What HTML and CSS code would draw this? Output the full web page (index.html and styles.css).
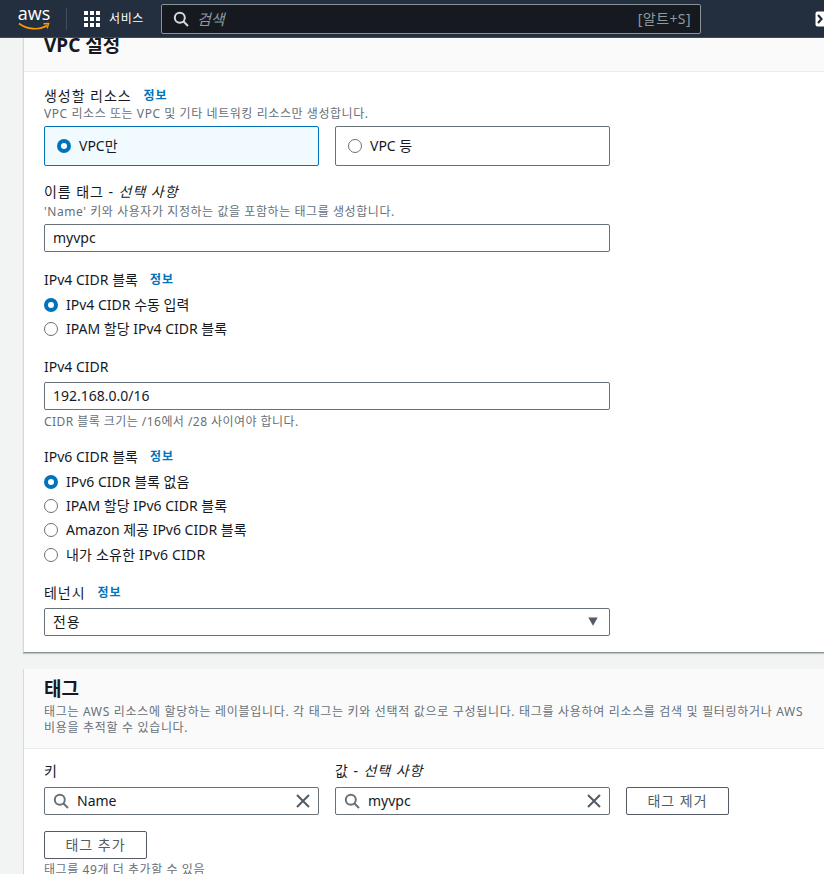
FILE: index.html
```html
<!DOCTYPE html>
<html lang="ko">
<head>
    <meta charset="UTF-8">
    <title>VPC 생성</title>
    <link rel="stylesheet" href="styles.css">
</head>
<body>

<header class="top-nav">
    <div class="brand">
        <span class="brand-text">aws</span>
        <svg class="brand-smile" width="32" height="9" viewBox="0 0 32 9">
            <path d="M1 1.5C9 7.5 21 8.5 29 3.5" fill="none" stroke="#ff9900" stroke-width="1.6"/>
            <path d="M25.5 1.8L30.6 1.5L29.2 6.4" fill="none" stroke="#ff9900" stroke-width="1.4"/>
        </svg>
    </div>
    <div class="nav-divider"></div>
    <button type="button" class="services-btn">
        <span class="grid-icon">
            <i></i><i></i><i></i><i></i><i></i><i></i><i></i><i></i><i></i>
        </span>
        <span class="services-text">서비스</span>
    </button>
    <div class="nav-search">
        <svg width="16" height="16" viewBox="0 0 16 16">
            <circle cx="6.8" cy="6.8" r="5" fill="none" stroke="#d5dbdb" stroke-width="2"/>
            <path d="M10.5 10.5L15 15" stroke="#d5dbdb" stroke-width="2"/>
        </svg>
        <span class="nav-search-text">검색</span>
        <span class="nav-search-key">[알트+S]</span>
    </div>
    <div class="nav-edge">
        <svg width="9" height="16" viewBox="0 0 9 16">
            <rect x="0.5" y="0.5" width="14" height="15" rx="2" fill="#fff"/>
            <path d="M3 4L6.5 8L3 12" fill="none" stroke="#232f3e" stroke-width="2.2"/>
        </svg>
    </div>
</header>

<main class="content">
    <section class="panel">
        <div class="panel-head panel-head-clipped">
            <h2>VPC 설정</h2>
        </div>
        <div class="panel-body">
            <div class="label-row"><span class="ko">생성할 리소스</span><a class="info">정보</a></div>
            <div class="desc">VPC 리소스 또는 VPC 및 기타 네트워킹 리소스만 생성합니다.</div>
            <div class="tiles">
                <div class="tile tile-on"><span class="radio radio-on"></span>VPC만</div>
                <div class="tile"><span class="radio"></span>VPC 등</div>
            </div>

            <div class="label-row gap-16"><span class="ko">이름 태그 - <em>선택 사항</em></span></div>
            <div class="desc desc-spaced">'Name' 키와 사용자가 지정하는 값을 포함하는 태그를 생성합니다.</div>
            <div class="input input-wide input-tight">myvpc</div>

            <div class="label-row gap-18"><span>IPv4 CIDR 블록</span><a class="info">정보</a></div>
            <div class="radio-group">
                <div class="radio-row"><span class="radio radio-on"></span>IPv4 CIDR 수동 입력</div>
                <div class="radio-row"><span class="radio"></span>IPAM 할당 IPv4 CIDR 블록</div>
            </div>

            <div class="label-row gap-15"><span>IPv4 CIDR</span></div>
            <div class="input input-wide input-loose">192.168.0.0/16</div>
            <div class="desc hint">CIDR 블록 크기는 /16에서 /28 사이여야 합니다.</div>

            <div class="label-row gap-17"><span>IPv6 CIDR 블록</span><a class="info">정보</a></div>
            <div class="radio-group">
                <div class="radio-row"><span class="radio radio-on"></span>IPv6 CIDR 블록 없음</div>
                <div class="radio-row"><span class="radio"></span>IPAM 할당 IPv6 CIDR 블록</div>
                <div class="radio-row"><span class="radio"></span>Amazon 제공 IPv6 CIDR 블록</div>
                <div class="radio-row"><span class="radio"></span><span class="ko-light">내가 소유한 IPv6 CIDR</span></div>
            </div>

            <div class="label-row gap-16"><span class="ko">테넌시</span><a class="info">정보</a></div>
            <div class="input input-wide input-loose select">
                <span class="ko">전용</span>
                <svg width="10" height="9" viewBox="0 0 10 9"><path d="M0.3 0.5H9.7L5 8.8Z" fill="#545b64"/></svg>
            </div>
        </div>
    </section>

    <section class="panel panel-second">
        <div class="panel-head">
            <h2>태그</h2>
            <div class="desc tag-desc">태그는 AWS 리소스에 할당하는 레이블입니다. 각 태그는 키와 선택적 값으로 구성됩니다. 태그를 사용하여 리소스를 검색 및 필터링하거나 AWS 비용을 추적할 수 있습니다.</div>
        </div>
        <div class="panel-body panel-body-tags">
            <div class="tag-row">
                <div class="tag-col">
                    <div class="label-row"><span>키</span></div>
                    <div class="input input-search">
                        <svg width="16" height="16" viewBox="0 0 16 16">
                            <circle cx="6.8" cy="6.8" r="5" fill="none" stroke="#687078" stroke-width="2"/>
                            <path d="M10.5 10.5L15 15" stroke="#687078" stroke-width="2"/>
                        </svg>
                        <span class="input-value">Name</span>
                        <svg width="14" height="14" viewBox="0 0 14 14"><path d="M1 1L13 13M13 1L1 13" stroke="#545b64" stroke-width="2"/></svg>
                    </div>
                </div>
                <div class="tag-col">
                    <div class="label-row"><span class="ko">값 - <em>선택 사항</em></span></div>
                    <div class="input input-search">
                        <svg width="16" height="16" viewBox="0 0 16 16">
                            <circle cx="6.8" cy="6.8" r="5" fill="none" stroke="#687078" stroke-width="2"/>
                            <path d="M10.5 10.5L15 15" stroke="#687078" stroke-width="2"/>
                        </svg>
                        <span class="input-value">myvpc</span>
                        <svg width="14" height="14" viewBox="0 0 14 14"><path d="M1 1L13 13M13 1L1 13" stroke="#545b64" stroke-width="2"/></svg>
                    </div>
                </div>
                <button type="button" class="btn">태그 제거</button>
            </div>
            <button type="button" class="btn btn-add">태그 추가</button>
            <div class="desc btn-hint">태그를 49개 더 추가할 수 있음</div>
        </div>
    </section>
</main>

</body>
</html>
```

FILE: styles.css
```css
html, body {
    margin: 0;
    height: 874px;
    overflow: hidden;
}

body {
    background-color: #f2f3f3;
    color: #16191f;
    font-family: "Noto Sans", "Noto Sans CJK KR", sans-serif;
    font-size: 14px;
    line-height: 20px;
}

/* Korean glyphs run wider in the original font */
.ko {
    letter-spacing: 0.95px;
}

.ko-light {
    letter-spacing: 0.2px;
}

/* top nav */
.top-nav {
    position: relative;
    z-index: 2;
    display: flex;
    align-items: center;
    height: 37px;
    background-color: #232f3e;
    border-bottom: 1px solid #3e4a58;
    color: #ffffff;
}

.brand {
    display: flex;
    flex-direction: column;
    align-items: center;
    width: 32px;
    margin-left: 18px;
}

.brand-text {
    font-family: "Open Sans", sans-serif;
    font-size: 18px;
    line-height: 14px;
    margin-top: -1px;
}

.brand-smile {
    display: block;
    margin-top: 2px;
}

.nav-divider {
    width: 1px;
    height: 22px;
    margin-left: 16px;
    background-color: #414d5c;
}

.services-btn {
    display: flex;
    align-items: center;
    gap: 9px;
    margin-left: 17px;
    padding: 0;
    background: none;
    border: none;
    color: #ffffff;
    font: inherit;
    font-size: 12px;
}

.services-text {
    letter-spacing: 0.6px;
}

.grid-icon {
    display: grid;
    grid-template-columns: repeat(3, 4px);
    gap: 2px;
}

.grid-icon i {
    width: 4px;
    height: 4px;
    background-color: #ffffff;
}

.nav-search {
    display: flex;
    align-items: center;
    box-sizing: border-box;
    width: 540px;
    height: 30px;
    margin-left: 17px;
    padding: 0 9px 0 11px;
    background-color: #16191f;
    border: 1px solid #879596;
    border-radius: 2px;
}

.nav-search-text {
    margin-left: 8px;
    color: #8d9ba0;
    font-size: 15px;
    font-style: italic;
}

.nav-search-key {
    margin-left: auto;
    color: #8d9ba0;
    font-size: 14px;
    letter-spacing: 0.4px;
}

.nav-edge {
    display: flex;
    margin-left: auto;
}

/* panels */
.content {
    padding-left: 23px;
}

.panel {
    background-color: #ffffff;
    border-left: 1px solid #d5dbdb;
    border-bottom: 1px solid #879596;
    box-shadow: 0 1px 1px rgba(0, 28, 36, 0.2);
}

.panel-second {
    margin-top: 16px;
    border-bottom: none;
    box-shadow: none;
}

.panel-head {
    padding: 8px 20px 12px;
    background-color: #fafafa;
    border-bottom: 1px solid #eaeded;
}

.panel-head-clipped {
    display: flex;
    align-items: flex-end;
    box-sizing: border-box;
    height: 34px;
    padding: 0 20px 14px;
}

.panel-head h2 {
    margin: 0 0 3px;
    font-size: 19px;
    line-height: 24px;
    font-weight: 700;
}

.panel-head-clipped h2 {
    margin: 0;
}

.panel-body {
    padding: 14px 20px 16px;
}

.panel-body-tags {
    padding-top: 12px;
}

/* form bits */
.label-row {
    display: flex;
    align-items: center;
    gap: 12px;
}

.label-row em {
    font-style: italic;
}

.info {
    color: #0073bb;
    font-size: 12px;
    font-weight: 700;
    letter-spacing: 1px;
}

.desc {
    width: 770px;
    color: #687078;
    font-size: 12px;
    line-height: 16px;
    letter-spacing: 0.57px;
    word-break: keep-all;
}

.tag-desc {
    letter-spacing: 0.68px;
}

.desc-spaced {
    margin-top: 2px;
}

.gap-15 {
    margin-top: 15px;
}

.gap-16 {
    margin-top: 16px;
}

.gap-17 {
    margin-top: 17px;
}

.gap-18 {
    margin-top: 18px;
}

.tiles {
    display: flex;
    gap: 16px;
    margin-top: 4px;
}

.tile {
    display: flex;
    align-items: center;
    box-sizing: border-box;
    width: 275px;
    height: 40px;
    padding-left: 12px;
    border: 1px solid #687078;
    border-radius: 2px;
}

.tile-on {
    background-color: #f1faff;
    border-color: #0073bb;
}

.radio {
    box-sizing: border-box;
    flex: none;
    width: 14px;
    height: 14px;
    margin-right: 8px;
    background-color: #ffffff;
    border: 1px solid #687078;
    border-radius: 50%;
}

.radio-on {
    border: 4px solid #0073bb;
}

.radio-group {
    margin-top: 3px;
}

.radio-row {
    display: flex;
    align-items: center;
    height: 24.3px;
}

.input {
    display: flex;
    align-items: center;
    box-sizing: border-box;
    height: 28px;
    padding: 0 8px;
    background-color: #ffffff;
    border: 1px solid #687078;
    border-radius: 2px;
}

.input-wide {
    width: 566px;
}

.input-tight {
    margin-top: 4px;
}

.input-loose {
    margin-top: 5px;
}

.hint {
    margin-top: 4px;
    letter-spacing: 0.45px;
}

.select {
    justify-content: space-between;
    padding-right: 11px;
}

.tag-row {
    display: flex;
    align-items: flex-end;
    gap: 16px;
}

.tag-col {
    display: flex;
    flex-direction: column;
    gap: 6px;
    width: 275px;
}

.input-search .input-value {
    flex: 1;
    margin-left: 8px;
}

.btn {
    box-sizing: border-box;
    width: 103px;
    height: 28px;
    padding: 0;
    background-color: #ffffff;
    border: 1px solid #545b64;
    border-radius: 2px;
    color: #545b64;
    font: inherit;
    letter-spacing: 1px;
}

.btn-add {
    display: block;
    margin-top: 16px;
}

.btn-hint {
    margin-top: 3px;
}
```
